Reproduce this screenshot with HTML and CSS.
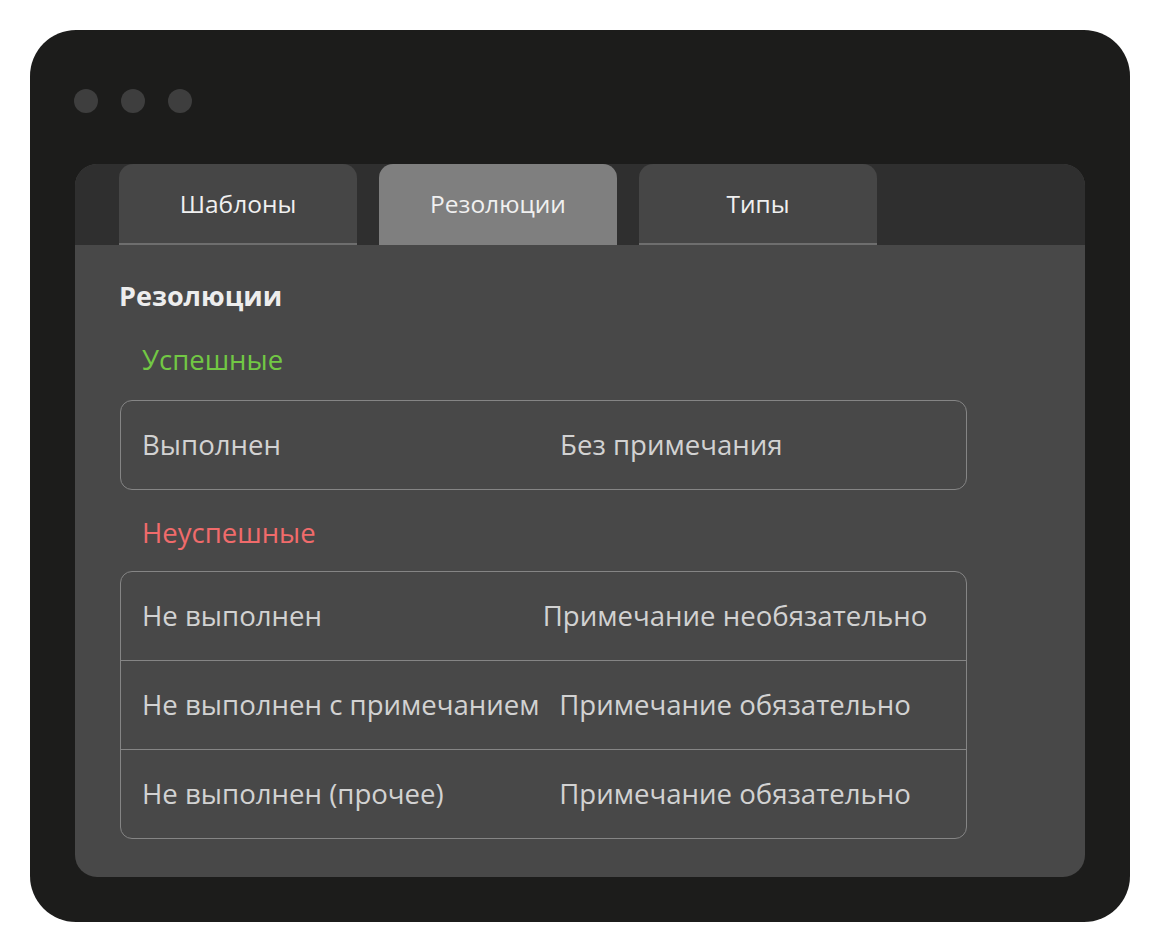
FILE: index.html
```html
<!DOCTYPE html>
<html lang="ru">
<head>
    <meta charset="UTF-8">
    <meta name="viewport" content="width=device-width, initial-scale=1.0">
    <title>Резолюции</title>
    <link rel="stylesheet" href="styles.css">
</head>
<body>
    <div class="window">
        <!-- Кнопки окна -->
        <div class="dots">
            <span class="dot"></span>
            <span class="dot"></span>
            <span class="dot"></span>
        </div>

        <div class="panel">
            <!-- Вкладки -->
            <div class="tabs">
                <button class="tab">Шаблоны</button>
                <button class="tab active">Резолюции</button>
                <button class="tab">Типы</button>
            </div>

            <div class="content">
                <h2>Резолюции</h2>

                <h3 class="group success">Успешные</h3>
                <div class="card">
                    <div class="row">
                        <span>Выполнен</span>
                        <span class="note">Без примечания</span>
                    </div>
                </div>

                <h3 class="group fail">Неуспешные</h3>
                <div class="card centered">
                    <div class="row">
                        <span>Не выполнен</span>
                        <span class="note">Примечание необязательно</span>
                    </div>
                    <div class="row">
                        <span>Не выполнен с примечанием</span>
                        <span class="note">Примечание обязательно</span>
                    </div>
                    <div class="row">
                        <span>Не выполнен (прочее)</span>
                        <span class="note">Примечание обязательно</span>
                    </div>
                </div>
            </div>
        </div>
    </div>
</body>
</html>
```

FILE: styles.css
```css
* {
    margin: 0;
    padding: 0;
    box-sizing: border-box;
}

body {
    font-family: "Open Sans", "Noto Sans", sans-serif;
    background-color: #ffffff;
    padding: 30px;
}

.window {
    width: 1100px;
    height: 892px;
    background-color: #1c1c1b;
    border-radius: 46px;
    padding: 59px 45px 45px;
    display: flex;
    flex-direction: column;
}

.dots {
    display: flex;
    gap: 23px;
    margin-left: -1px;
    margin-bottom: 51px;
}

.dot {
    width: 24px;
    height: 24px;
    border-radius: 50%;
    background-color: #3e3e3e;
}

.panel {
    flex: 1;
    background-color: #484848;
    border-radius: 22px;
    overflow: hidden;
}

.tabs {
    display: flex;
    gap: 22px;
    height: 81px;
    padding-left: 44px;
    background-color: #2f2f2f;
}

.tab {
    width: 238px;
    height: 81px;
    border: none;
    border-bottom: 2px solid #6e6e6e;
    border-radius: 14px 14px 0 0;
    background-color: #464646;
    color: #f0f0f0;
    font-family: inherit;
    font-size: 24.5px;
    cursor: pointer;
}

.tab.active {
    background-color: #7f7f7f;
    border-bottom-color: #7f7f7f;
}

.content {
    padding: 33px 0 0 44px;
}

h2 {
    font-size: 27px;
    font-weight: 700;
    line-height: 36px;
    color: #ededed;
}

.group {
    font-size: 27.5px;
    font-weight: 400;
    line-height: 36px;
    padding-left: 23px;
}

.group.success {
    color: #72c844;
    margin-top: 28px;
    margin-bottom: 22px;
}

.group.fail {
    color: #f06b6b;
    margin-top: 25px;
    margin-bottom: 20px;
}

.card {
    width: 847px;
    margin-left: 1px;
    border: 1px solid #858585;
    border-radius: 12px;
}

.row {
    display: grid;
    grid-template-columns: 418px 1fr;
    align-items: center;
    height: 88px;
    padding: 0 0 3px 21px;
    font-size: 27.6px;
    color: #d2d2d2;
}

.row + .row {
    height: 89px;
    border-top: 1px solid #858585;
}

.card.centered .row {
    grid-template-columns: 399px 388px;
}

.card.centered .note {
    text-align: center;
}
```
